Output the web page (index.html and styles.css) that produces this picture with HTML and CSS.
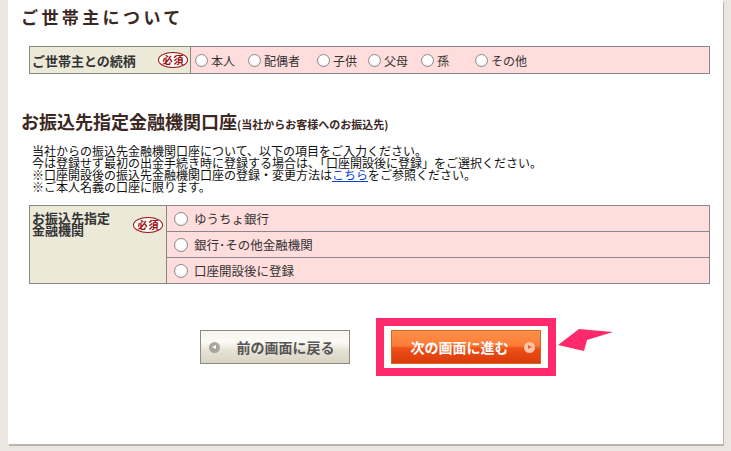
FILE: index.html
```html
<!DOCTYPE html>
<html lang="ja">
<head>
<meta charset="utf-8">
<link rel="stylesheet" href="styles.css">
</head>
<body>
<div class="panel">
  <h2 class="title">ご世帯主について</h2>
  <table class="form t1">
    <tr>
      <th><div class="lab"><span>ご世帯主との続柄</span><span class="req">必須</span></div></th>
      <td>
        <div class="radios">
          <label class="ri"><span class="rb"></span>本人</label>
          <label class="ri"><span class="rb"></span>配偶者</label>
          <label class="ri"><span class="rb"></span>子供</label>
          <label class="ri"><span class="rb"></span>父母</label>
          <label class="ri"><span class="rb"></span>孫</label>
          <label class="ri"><span class="rb"></span>その他</label>
        </div>
      </td>
    </tr>
  </table>

  <h2 class="title2">お振込先指定金融機関口座<small>(当社からお客様へのお振込先)</small></h2>
  <p class="note">当社からの振込先金融機関口座について、以下の項目をご入力ください。<br>今は登録せず最初の出金手続き時に登録する場合は、「口座開設後に登録」をご選択ください。<br>※口座開設後の振込先金融機関口座の登録・変更方法は<a href="#">こちら</a>をご参照ください。<br>※ご本人名義の口座に限ります。</p>

  <table class="form t2">
    <tr>
      <th rowspan="3"><div class="lab2"><span>お振込先指定<br>金融機関</span><span class="req">必須</span></div></th>
      <td><label class="ri2"><span class="rb"></span>ゆうちょ銀行</label></td>
    </tr>
    <tr><td><label class="ri2"><span class="rb"></span>銀行･その他金融機関</label></td></tr>
    <tr><td><label class="ri2"><span class="rb"></span>口座開設後に登録</label></td></tr>
  </table>

  <div class="buttons">
    <a class="btn back" href="#"><span class="ico"></span><span class="btxt">前の画面に戻る</span></a>
    <div class="nextwrap">
      <a class="btn next" href="#"><span class="btxt">次の画面に進む</span><span class="ico"></span></a>
      <span class="hl"></span>
      <svg class="arrow" width="60" height="30" viewBox="0 0 60 30"><polygon points="0,18 21,2 55,5 29,13 26,24" fill="#ff2a6d"/></svg>
    </div>
  </div>
</div>
</body>
</html>
```
FILE: styles.css
```css
html, body { margin: 0; padding: 0; }
body {
  background: #ebe7e0;
  font-family: "Noto Sans CJK JP", "Noto Sans", sans-serif;
  color: #222;
  width: 731px;
  height: 451px;
  overflow: hidden;
}
.panel {
  margin-left: 8px;
  width: 715px;
  height: 444px;
  box-sizing: border-box;
  background: #fff;
  box-shadow: 1px 2px 0 #b9b5ad;
  padding: 7px 13px 0 13px;
}
.title {
  margin: 0 0 19px 0;
  font-size: 17px;
  line-height: 20px;
  letter-spacing: 3.4px;
  font-weight: bold;
  color: #3c2823;
}
.form {
  border-collapse: collapse;
  margin-left: 8px;
  width: 681px;
}
.form th, .form td {
  border: 1px solid #888;
  padding: 0;
  font-size: 12px;
}
.form th {
  background: #ece9d9;
  text-align: left;
  vertical-align: top;
}
.form td { background: #ffdddd; }
.t1 th { width: 160px; height: 26px; vertical-align: middle; }
.lab {
  display: flex;
  align-items: center;
  justify-content: space-between;
  padding: 0 2px 0 2px;
  font-weight: bold;
  font-size: 13px;
  color: #333;
}
.req {
  display: inline-flex;
  align-items: center;
  justify-content: center;
  box-sizing: border-box;
  width: 30px;
  height: 16px;
  border: 1.5px solid #9a0b0b;
  border-radius: 50%;
  background: #fff;
  color: #9a0b0b;
  font-size: 10px;
  font-weight: bold;
  letter-spacing: 1px;
  padding-left: 1px;
  line-height: 1;
  flex: none;
}
.radios {
  display: flex;
  align-items: center;
  padding-left: 4px;
  color: #333;
}
.ri { display: flex; align-items: center; }
.ri:nth-child(1) { width: 53px; }
.ri:nth-child(2) { width: 69px; }
.ri:nth-child(3) { width: 51px; }
.ri:nth-child(4) { width: 53px; }
.ri:nth-child(5) { width: 54px; }
.rb {
  display: inline-block;
  width: 11px;
  height: 11px;
  border: 1px solid #8a8a8a;
  border-radius: 50%;
  background: radial-gradient(circle at 50% 40%, #fff 45%, #e4e4e4 100%);
  margin-right: 3px;
  flex: none;
}
.title2 {
  margin: 36px 0 10px 0;
  font-size: 18px;
  line-height: 22px;
  font-weight: bold;
  color: #3c2823;
  letter-spacing: 0;
}
.title2 small {
  font-size: 11px;
  font-weight: bold;
}
.note {
  margin: 0 0 12px 11px;
  font-size: 12px;
  line-height: 12px;
  color: #111;
}
.note a { color: #0a3fd0; text-decoration: underline; }
.t2 th { width: 136px; }
.t2 td { height: 25px; }
.lab2 {
  display: flex;
  justify-content: space-between;
  align-items: flex-start;
  padding: 6px 3px 0 2px;
  font-weight: bold;
  font-size: 13px;
  line-height: 12px;
  color: #333;
}
.lab2 .req { margin-top: 5px; }
.ri2 {
  display: flex;
  align-items: center;
  padding-left: 7px;
  font-size: 12.5px;
  color: #333;
}
.ri2 .rb { width: 12px; height: 12px; margin-right: 6px; }
.buttons {
  display: flex;
  justify-content: center;
  gap: 41px;
  margin-top: 46px;
  padding-left: 9px;
}
.btn {
  display: flex;
  align-items: center;
  box-sizing: border-box;
  width: 150px;
  height: 34px;
  text-decoration: none;
  font-weight: bold;
  font-size: 14px;
}
.back {
  border: 1px solid #8d8a80;
  background: linear-gradient(#f7f5ee 0%, #fbfaf6 35%, #e6e2d5 60%, #d9d4c3 100%);
  color: #555;
  padding-left: 8px;
}
.back .ico {
  width: 11px; height: 11px; border-radius: 50%;
  background: #a9a6a0;
  position: relative;
  margin-right: 17px;
  flex: none;
}
.back .ico::after {
  content: ""; position: absolute; left: 3px; top: 3px;
  border-style: solid; border-width: 2.5px 4px 2.5px 0;
  border-color: transparent #fff transparent transparent;
}
.nextwrap { position: relative; }
.next {
  border: 1px solid #d9661f;
  background: linear-gradient(#ff9149 0%, #fb7c37 45%, #ed4f16 55%, #db3b0c 100%);
  color: #fff;
  padding-left: 19px;
}
.next .ico {
  width: 11px; height: 11px; border-radius: 50%;
  background: #f9c4a8;
  position: relative;
  margin-left: 15px;
  flex: none;
}
.next .ico::after {
  content: ""; position: absolute; left: 4px; top: 3px;
  border-style: solid; border-width: 2.5px 0 2.5px 4px;
  border-color: transparent transparent transparent #ef5d22;
}
.hl {
  position: absolute;
  left: -15px; top: -12px;
  width: 180px; height: 58px;
  box-sizing: border-box;
  border: 8px solid #ff2a6d;
}
.arrow {
  position: absolute;
  left: 167px; top: -3px;
}
```
